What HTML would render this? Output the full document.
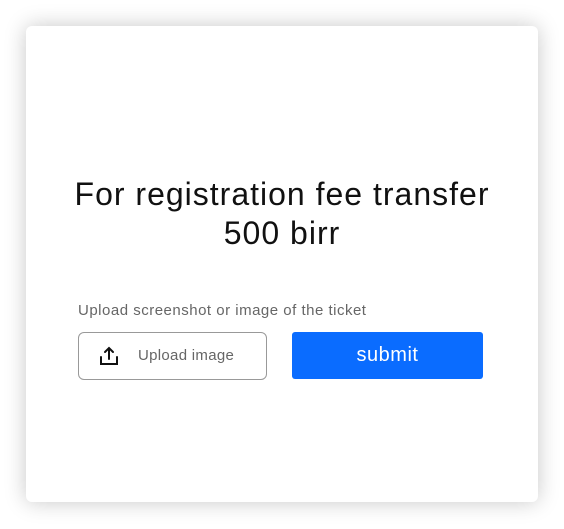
<!DOCTYPE html>
<html><head><style>
body{margin:0;width:564px;height:529px;background:#fff;font-family:"Liberation Sans",sans-serif;position:relative;overflow:hidden}
.card{position:absolute;left:26px;top:26px;width:512px;height:476px;background:#fff;border-radius:6px;box-shadow:0 0 22px rgba(0,0,0,0.22)}
h1{position:absolute;left:0;width:564px;top:175px;margin:0;text-align:center;font-weight:normal;font-size:32px;letter-spacing:1px;line-height:39px;color:#111}
.lbl{position:absolute;left:78px;top:302px;font-size:15px;letter-spacing:0.5px;color:#666}
.up{position:absolute;left:78px;top:332px;width:189px;height:48px;border:1px solid #999;border-radius:6px;box-sizing:border-box}
.up span{position:absolute;left:59px;top:14px;font-size:15px;letter-spacing:0.3px;color:#666}
.up svg{position:absolute;left:20px;top:13px}
.sb{position:absolute;left:292px;top:332px;width:191px;height:47px;background:#0a6cff;border-radius:3px;color:#fff;font-size:20px;letter-spacing:0.5px;text-align:center;line-height:47px}
</style></head><body>
<div class="card"></div>
<h1>For registration fee transfer<br>500 birr</h1>
<div class="lbl">Upload screenshot or image of the ticket</div>
<div class="up"><svg width="20" height="20" viewBox="0 0 20 20" fill="none" stroke="#111" stroke-width="2" stroke-linecap="round"><path d="M10 13V2M6 6l4-4 4 4M2 11v7h16v-7"/></svg><span>Upload image</span></div>
<div class="sb">submit</div>
</body></html>
